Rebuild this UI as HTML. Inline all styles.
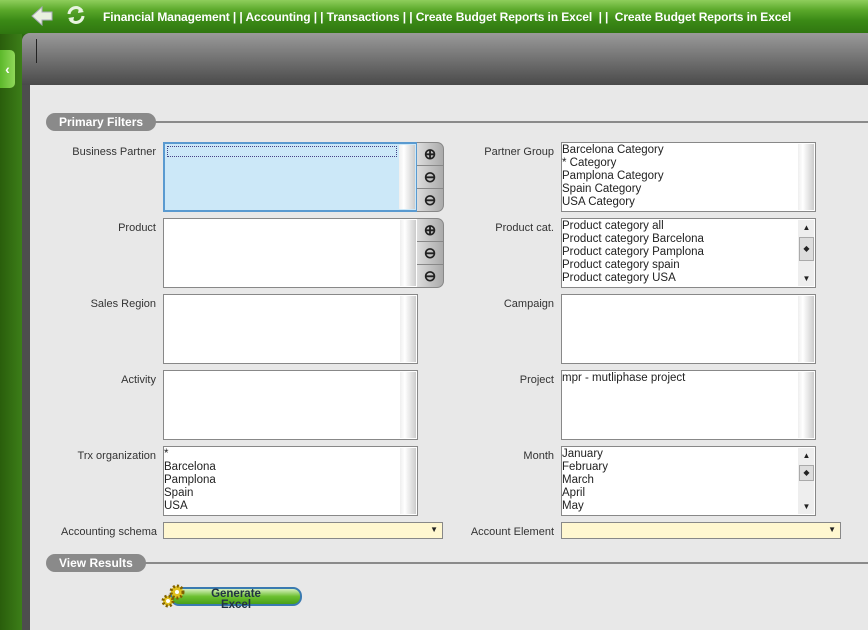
<!DOCTYPE html>
<html><head><meta charset="utf-8"><style>
*{margin:0;padding:0;box-sizing:border-box}
body{width:868px;height:630px;overflow:hidden;position:relative;font-family:"Liberation Sans",Tahoma,sans-serif;font-size:11px;color:#222;background:#2d6a10}
.top{position:absolute;left:0;top:0;width:868px;height:34px;background:linear-gradient(#8fce5c 0,#5aa82a 30%,#3b8a16 60%,#2f7510 100%)}
.side{position:absolute;left:0;top:34px;width:22px;height:596px;background:linear-gradient(90deg,#2a5e0c,#3c7e18)}
.tab{position:absolute;left:0;top:50px;width:15px;height:38px;background:linear-gradient(90deg,#5cb82a,#8fd85a);border-radius:0 5px 5px 0;color:#fff;font-weight:bold;font-size:14px;line-height:38px;text-align:center}
.panel{position:absolute;left:22px;top:33px;width:846px;height:597px;background:#4d4d4d;border-radius:8px 0 0 0}
.hdr{position:absolute;left:22px;top:33px;width:846px;height:52px;background:linear-gradient(#9a9a9a,#4a4a4a);border-radius:8px 0 0 0}
.hdr:after{content:"";position:absolute;left:14px;top:6px;width:1px;height:24px;background:#222}
.content{position:absolute;left:30px;top:85px;width:838px;height:545px;background:#e8e8e8}
.crumb{position:absolute;left:103px;top:10px;color:#fff;font-weight:bold;font-size:12px;white-space:nowrap;letter-spacing:-0.1px}
.sec{position:absolute;left:46px;height:18px;background:#8a8a8a;color:#fff;font-weight:bold;font-size:12px;border-radius:9px;padding:0 13px;line-height:18px}
.line{position:absolute;height:2px;background:#8a8a8a;right:0}
.lbl{position:absolute;text-align:right;width:150px;color:#333;font-size:11px}
.box{position:absolute;width:255px;height:70px;background:#fff;border:1px solid #888;line-height:13px;overflow:hidden;padding-top:1px;font-size:11.5px}
.box .sb{position:absolute;right:1px;top:1px;bottom:1px;width:16px;background:linear-gradient(90deg,#eee,#fff 30%,#ccc)}
.btns{position:absolute;width:27px;height:70px;background:linear-gradient(90deg,#ddd,#aaa);border:1px solid #888;border-left:none;border-radius:0 7px 7px 0}
.btns i{display:block;height:23px;border-bottom:1px solid #888;font-style:normal;text-align:center;line-height:23px;font-size:15px;font-weight:bold}
.combo{position:absolute;top:522px;height:17px;background:#fff7d0;border:1px solid #888}
.combo:after{content:"▼";position:absolute;right:4px;top:2px;font-size:8px}
.arr{position:absolute;right:1px;width:15px;font-size:8px;text-align:center}
</style></head><body>
<div class="top"></div>
<svg style="position:absolute;left:30px;top:5px" width="24" height="22"><path d="M2 11 L12 2 L12 7 L22 7 L22 15 L12 15 L12 20 Z" fill="#e8f0e0" stroke="#aab" stroke-width="1"/></svg>
<svg style="position:absolute;left:66px;top:5px" width="20" height="20"><path d="M3 9 A7 7 0 0 1 16 6 M17 11 A7 7 0 0 1 4 14" stroke="#e8f4e0" stroke-width="3" fill="none"/><path d="M13 3 L18 7 L12 8Z M7 17 L2 13 L8 12Z" fill="#e8f4e0"/></svg>
<div class="crumb">Financial Management | | Accounting | | Transactions | | Create Budget Reports in Excel &nbsp;| | &nbsp;Create Budget Reports in Excel</div>
<div class="side"></div>
<div class="tab">&lsaquo;</div>
<div class="panel"></div>
<div class="hdr"></div>
<div class="content"></div>
<div class="line" style="left:150px;top:121px"></div>
<div class="sec" style="top:113px">Primary Filters</div>

<div class="lbl" style="left:6px;top:146px">Business Partner</div>
<div class="box" style="left:163px;top:142px;background:#cce8f8;border:2px solid #5a9ad0"><div style="margin:1px 19px 0 2px;height:11px;border:1px dotted #448"></div><div class="sb"></div></div>
<div class="btns" style="left:417px;top:142px"><i>⊕</i><i>⊖</i><i style="border:none">⊖</i></div>
<div class="lbl" style="left:6px;top:222px">Product</div>
<div class="box" style="left:163px;top:218px"><div class="sb"></div></div>
<div class="btns" style="left:417px;top:218px"><i>⊕</i><i>⊖</i><i style="border:none">⊖</i></div>
<div class="lbl" style="left:6px;top:298px">Sales Region</div>
<div class="box" style="left:163px;top:294px"><div class="sb"></div></div>
<div class="lbl" style="left:6px;top:374px">Activity</div>
<div class="box" style="left:163px;top:370px"><div class="sb"></div></div>
<div class="lbl" style="left:6px;top:450px">Trx organization</div>
<div class="box" style="left:163px;top:446px">*<br>Barcelona<br>Pamplona<br>Spain<br>USA<div class="sb"></div></div>
<div class="lbl" style="left:-93px;top:526px;width:250px">Accounting schema</div>
<div class="combo" style="left:163px;width:280px"></div>

<div class="lbl" style="left:404px;top:146px">Partner Group</div>
<div class="box" style="left:561px;top:142px">Barcelona Category<br>* Category<br>Pamplona Category<br>Spain Category<br>USA Category<div class="sb"></div></div>
<div class="lbl" style="left:404px;top:222px">Product cat.</div>
<div class="box" style="left:561px;top:218px">Product category all<br>Product category Barcelona<br>Product category Pamplona<br>Product category spain<br>Product category USA<div class="sb" style="background:#eee"></div><span class="arr" style="top:2px">▲</span><span class="arr" style="top:18px;height:24px;border:1px solid #aaa;background:#ddd;line-height:22px">◆</span><span class="arr" style="bottom:2px">▼</span></div>
<div class="lbl" style="left:404px;top:298px">Campaign</div>
<div class="box" style="left:561px;top:294px"><div class="sb"></div></div>
<div class="lbl" style="left:404px;top:374px">Project</div>
<div class="box" style="left:561px;top:370px">mpr - mutliphase project<div class="sb"></div></div>
<div class="lbl" style="left:404px;top:450px">Month</div>
<div class="box" style="left:561px;top:446px">January<br>February<br>March<br>April<br>May<div class="sb" style="background:#eee"></div><span class="arr" style="top:2px">▲</span><span class="arr" style="top:18px;height:16px;border:1px solid #aaa;background:#ddd;line-height:14px">◆</span><span class="arr" style="bottom:2px">▼</span></div>
<div class="lbl" style="left:304px;top:526px;width:250px">Account Element</div>
<div class="combo" style="left:561px;width:280px"></div>

<div class="line" style="left:140px;top:562px"></div>
<div class="sec" style="top:554px">View Results</div>
<div style="position:absolute;left:170px;top:587px;width:132px;height:19px;border:2px solid #3a7ab0;border-radius:9px;background:linear-gradient(#d8f0c0,#6cc030 50%,#48a018);text-align:center;font-weight:bold;font-size:11.5px;line-height:11px;color:#234">Generate<br>Excel</div>
<svg style="position:absolute;left:159px;top:582px" width="30" height="30"><circle cx="18" cy="10" r="6" fill="#e0c020" stroke="#806000" stroke-dasharray="2 2" stroke-width="3"/><circle cx="18" cy="10" r="2" fill="#fff"/><circle cx="9" cy="19" r="5" fill="#e0c020" stroke="#806000" stroke-dasharray="2 2" stroke-width="3"/><circle cx="9" cy="19" r="2" fill="#fff"/></svg>
</body></html>
